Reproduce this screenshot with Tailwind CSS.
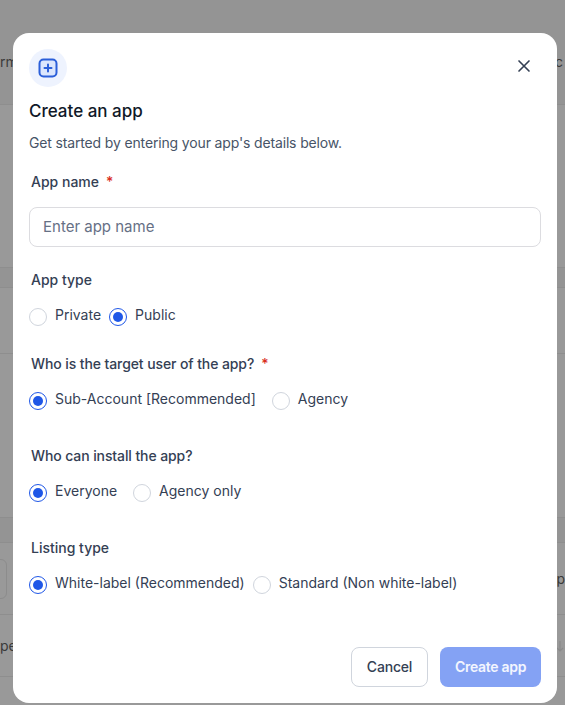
<!doctype html>
<html>
<head>
<meta charset="utf-8">
<script src="https://cdn.jsdelivr.net/npm/@tailwindcss/browser@4"></script>
</head>
<body class="m-0 font-['Inter',sans-serif]">
<div class="relative w-[565px] h-[705px] overflow-hidden bg-[#999999]">
  <!-- page behind the backdrop -->
  <div class="absolute inset-0 flex flex-col text-sm text-[#3a3a3a]">
    <div class="h-[105px] bg-[#949494] border-b border-[#8e8e8e] flex justify-between items-start pt-[54px]">
      <span class="leading-4">rms</span>
      <span class="mr-[2px] leading-4">c</span>
    </div>
    <div class="h-[163px] border-b border-[#8e8e8e]"></div>
    <div class="h-[20px] bg-[#949494] border-b border-[#8e8e8e]"></div>
    <div class="h-[66px] border-b border-[#8e8e8e]"></div>
    <div class="h-[164px] border-b border-[#8e8e8e]"></div>
    <div class="h-[25px] bg-[#949494] border-b border-[#8e8e8e]"></div>
    <div class="h-[72px] border-b border-[#8e8e8e] flex justify-between items-center">
      <span class="ml-[-8px] w-[15px] h-[40px] rounded-md border border-[#8c8c8c]"></span>
      <span class="leading-4">Op</span>
    </div>
    <div class="h-[62px] border-b border-[#8e8e8e] flex justify-between items-center">
      <span class="leading-4">pe</span>
      <svg class="size-3 mr-[-1px]" viewBox="0 0 12 12" fill="none" stroke="#8a8a8a" stroke-width="1.2"><path d="M6 1v10M3 8l3 3 3-3"/></svg>
    </div>
  </div>

  <!-- modal -->
  <div class="absolute left-[13px] top-[33px] w-[544px] h-[670px] rounded-2xl bg-white px-4 pt-4 flex flex-col">
    <div class="flex items-start justify-between">
      <div class="size-[38px] rounded-full bg-[#eef3fe] flex items-center justify-center">
        <svg class="size-5" viewBox="0 0 20 20" fill="none" stroke="#2b5fd9" stroke-width="2" stroke-linecap="round" stroke-linejoin="round">
          <rect x="1.5" y="1.5" width="17" height="17" rx="4" fill="#dbe6fd"/>
          <path d="M10 6.5v7M6.5 10h7"/>
        </svg>
      </div>
      <button class="mt-[7px] mr-[7px] size-5 flex items-center justify-center">
        <svg class="size-5" viewBox="0 0 24 24" fill="none" stroke="#344054" stroke-width="2" stroke-linecap="round" stroke-linejoin="round">
          <path d="M18 6 6 18M6 6l12 12"/>
        </svg>
      </button>
    </div>
    <h2 class="mt-[12px] text-[17px] leading-6 font-medium text-[#101828]">Create an app</h2>
    <p class="mt-[10px] text-sm leading-5 text-[#475467] tracking-[-0.15px]">Get started by entering your app's details below.</p>

    <label class="mt-[19px] ml-[2px] text-sm leading-5 font-medium text-[#344054] flex gap-[7px]">App name <span class="text-[#d92d20]">*</span></label>
    <div class="mt-[15px] h-10 w-[512px] rounded-lg border border-[#dcdce0] flex items-center pl-[13px] text-[15px] text-[#667085]">Enter app name</div>

    <div class="mt-[23px] ml-[2px] text-sm leading-5 font-medium text-[#344054]">App type</div>
    <div class="mt-[15px] flex items-start text-sm leading-5 text-[#344054]">
      <span class="mt-[3px] size-[18px] rounded-full border border-[#d0d5dd] bg-white"></span>
      <span class="ml-2">Private</span>
      <span class="ml-2 mt-[3px] size-[18px] rounded-full border border-[#1f57e7] flex items-center justify-center"><span class="size-[10px] rounded-full bg-[#1f57e7]"></span></span>
      <span class="ml-2">Public</span>
    </div>

    <div class="mt-[28px] ml-[2px] text-sm leading-5 font-medium text-[#344054] tracking-[-0.1px] flex gap-[7px]">Who is the target user of the app? <span class="text-[#d92d20]">*</span></div>
    <div class="mt-[15px] flex items-start text-sm leading-5 text-[#344054]">
      <span class="mt-[3px] size-[18px] rounded-full border border-[#1f57e7] flex items-center justify-center"><span class="size-[10px] rounded-full bg-[#1f57e7]"></span></span>
      <span class="ml-2">Sub-Account [Recommended]</span>
      <span class="ml-4 mt-[3px] size-[18px] rounded-full border border-[#d0d5dd]"></span>
      <span class="ml-2">Agency</span>
    </div>

    <div class="mt-[36px] ml-[2px] text-sm leading-5 font-medium text-[#344054] tracking-[-0.1px]">Who can install the app?</div>
    <div class="mt-[15px] flex items-start text-sm leading-5 text-[#344054]">
      <span class="mt-[3px] size-[18px] rounded-full border border-[#1f57e7] flex items-center justify-center"><span class="size-[10px] rounded-full bg-[#1f57e7]"></span></span>
      <span class="ml-2">Everyone</span>
      <span class="ml-4 mt-[3px] size-[18px] rounded-full border border-[#d0d5dd]"></span>
      <span class="ml-2">Agency only</span>
    </div>

    <div class="mt-[36px] ml-[2px] text-sm leading-5 font-medium text-[#344054]">Listing type</div>
    <div class="mt-[15px] flex items-start text-sm leading-5 text-[#344054]">
      <span class="mt-[3px] size-[18px] rounded-full border border-[#1f57e7] flex items-center justify-center"><span class="size-[10px] rounded-full bg-[#1f57e7]"></span></span>
      <span class="ml-2">White-label (Recommended)</span>
      <span class="ml-2 mt-[3px] size-[18px] rounded-full border border-[#d0d5dd]"></span>
      <span class="ml-2">Standard (Non white-label)</span>
    </div>

    <div class="mt-auto mb-4 flex justify-end gap-[12px]">
      <button class="h-10 w-[77px] rounded-lg border border-[#d0d5dd] bg-white text-sm font-medium text-[#344054] tracking-[-0.2px]">Cancel</button>
      <button class="h-10 w-[101px] rounded-lg bg-[#84a2f4] text-sm font-semibold text-white/90 tracking-[-0.3px]">Create app</button>
    </div>
  </div>
</div>
</body>
</html>
